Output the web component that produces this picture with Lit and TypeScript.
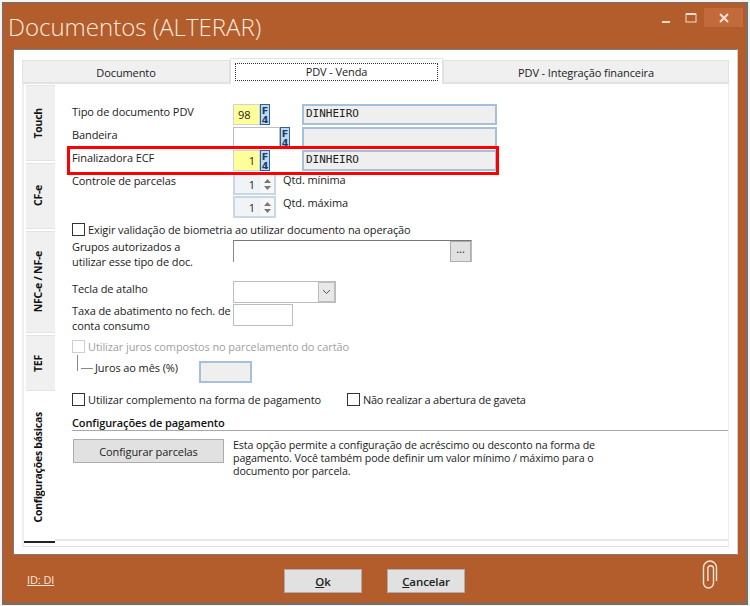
import { LitElement, html, css } from "lit";
import { customElement } from "lit/decorators.js";

@customElement("app-root")
export class AppRoot extends LitElement {
  static styles = css`
    :host { display: block; width: 750px; height: 606px; background: #f4f4f4; font-family: "Open Sans", "Noto Sans", sans-serif; font-size: 11px; letter-spacing: -0.1px; color: #222; overflow: hidden; }
    * { box-sizing: border-box; }
    .window { width: 746px; height: 603px; margin: 2px 0 0 2px; background: #b25d2b; border: 1px solid #707070; border-width: 1px 2px 2px 1px; display: flex; flex-direction: column; position: relative; }
    .titlebar { height: 46px; display: flex; align-items: flex-start; justify-content: space-between; flex: none; }
    h1 { margin: 7px 0 0 5px; font-size: 24px; line-height: 34px; font-weight: 300; letter-spacing: 0; color: #fbeadf; }
    .wctl { display: flex; align-items: flex-start; margin-top: 5px; margin-right: 3px; }
    .wbtn { width: 26px; height: 19px; display: flex; align-items: center; justify-content: center; }
    .wbtn.close { width: 39px; background: #c36a3d; }
    .panel { margin: 0 8px 0 10px; height: 506px; flex: none; background: #fff; border: 1px solid #7c7c7c; border-right-color: #d0d0d0; padding: 10px 8px 7px 8px; display: flex; flex-direction: column; }
    .tabs { display: flex; height: 24px; flex: none; }
    .tab { background: #f0f0f0; border: 1px solid #e2e2e2; border-bottom: 2px solid #e2e2e2; display: flex; align-items: center; justify-content: center; color: #222; padding-top: 1px; }
    .tab.doc { width: 208px; }
    .tab.cur { width: 213px; height: 26px; margin-top: -2px; background: #fff; border-bottom: none; padding: 2px 4px; }
    .focus { width: 100%; height: 18px; border: 1px dotted #333; display: flex; align-items: center; justify-content: center; }
    .tab.fin { flex: 1; }
    .page { flex: 1; display: flex; border-left: 2px solid #eee; border-right: 1px solid #eee; border-bottom: 1px solid #ddd; min-height: 0; }
    .vtabs { width: 31px; flex: none; padding-left: 2px; padding-top: 1px; display: flex; flex-direction: column; }
    .vtab { width: 29px; background: #f0f0f0; border-top: 1px solid #e4e4e4; border-bottom: 1px solid #e4e4e4; display: flex; align-items: center; justify-content: center; margin-bottom: 2px; padding-right: 5px; }
    .vtab span { writing-mode: vertical-rl; transform: rotate(180deg); font-weight: 700; font-size: 10.5px; letter-spacing: -0.25px; color: #111; white-space: nowrap; }
    .vtab.active { background: #fff; border: none; border-bottom: 2px solid #222; margin: 0 0 0 -2px; width: 31px; padding-right: 4px; }
    .form { flex: 1; position: relative; border-bottom: 2px solid #e8e8e8; margin-bottom: 5px; padding: 20px 0 0 17px; min-width: 0; }
    .row { display: grid; grid-template-columns: 161px auto; margin-bottom: 2px; height: 21px; }
    .lbl { line-height: 16px; white-space: nowrap; }
    .lbl.two { line-height: 14.5px; }
    .field { display: flex; align-items: flex-start; }
    .input { height: 21px; border: 1px solid #bdbdbd; background: #fff; line-height: 19px; padding: 0 4px; }
    .code { width: 27px; border-color: #cdd3d9; }
    .yellow { background: #ffff99; }
    .r { text-align: right; }
    .f4 { width: 10px; height: 21px; background: #c4d6ea; border: 1px solid #2d6296; color: #16406c; display: flex; align-items: center; justify-content: center; }
    .f4 span { display: block; width: 7px; font: 700 9.5px/9px "DejaVu Sans", sans-serif; word-break: break-all; letter-spacing: 0; text-align: center; }
    .desc { width: 195px; height: 21px; margin-left: 32px; background: #efefef; border: 2px solid #a7c0da; font: 11px/16px "DejaVu Sans Mono", monospace; letter-spacing: 0; color: #222; padding-left: 2px; }
    .spin { width: 43px; height: 22px; background: #f1f4f7; border: 2px solid #c9d6e3; display: flex; align-items: center; justify-content: flex-end; }
    .spin b { font-weight: 400; padding-right: 6px; }
    .arrows { width: 13px; height: 100%; display: flex; flex-direction: column; align-items: center; justify-content: center; gap: 3px; background: #f7f7f7; }
    .qt { margin-left: 7px; line-height: 15px; margin-top: -1px; }
    .check { display: flex; align-items: center; gap: 3px; height: 14px; white-space: nowrap; }
    .check.tight { letter-spacing: -0.25px; }
    .box { width: 13px; height: 13px; border: 1px solid #333; background: #fff; flex: none; }
    .dim { color: #a0a0a0; }
    .dim .box { border-color: #d0d0d0; }
    .group { height: 22px; }
    .combo-wide { width: 239px; height: 22px; border: 1px solid #bbb; border-top-color: #777; border-left-color: #888; border-bottom: none; display: flex; justify-content: flex-end; align-items: stretch; }
    .dots { width: 21px; background: #e1e1e1; border: 1px solid #adadad; line-height: 14px; text-align: center; }
    .combo { width: 103px; height: 22px; border: 1px solid #bdbdbd; display: flex; justify-content: flex-end; }
    .combo i { width: 17px; background: #e8e8e8; border: 1px solid #bdbdbd; display: flex; align-items: center; justify-content: center; }
    .juros { display: flex; height: 20px; margin: 8px 0 11px; }
    .tree { width: 18px; height: 16px; border-left: 1px solid #888; margin-left: 5px; position: relative; flex: none; margin-top: -6px; }
    .tree::after { content: ""; position: absolute; left: 3px; bottom: 2px; width: 12px; border-top: 1px solid #888; }
    .juros span { line-height: 14px; width: 104px; }
    .juros-in { width: 53px; height: 22px; background: #efefef; border: 2px solid #a7c0da; }
    .two-checks { display: flex; gap: 26px; }
    .sec { font-weight: 600; margin-top: 9px; height: 16px; line-height: 16px; border-bottom: 1px solid #a8a8a8; color: #111; }
    .cfg { display: flex; margin-top: 8px; gap: 9px; padding-left: 1px; }
    .btn { background: #e1e1e1; border: 1px solid #adadad; display: flex; align-items: center; justify-content: center; color: #222; }
    .cfg .btn { width: 151px; height: 24px; flex: none; }
    .cfg p { margin: 0; white-space: nowrap; font-size: 10.7px; line-height: 13px; }
    .highlight { position: absolute; left: 12px; top: 62px; width: 432px; height: 29px; border: 3px solid #f00; pointer-events: none; }
    .footer { flex: 1; position: relative; display: flex; align-items: flex-start; padding-left: 24px; }
    .id { margin-top: 17px; color: #fbe6d8; text-decoration: underline; width: 257px; }
    .fbtns { display: flex; gap: 25px; margin-top: 14px; }
    .fbtns .btn { width: 78px; height: 24px; font-weight: 600; font-size: 11.5px; }
    u { text-decoration: underline; }
    .clip { position: absolute; right: 28px; top: 5px; }
  `;

  private f4() { return html`<div class="f4"><span>F4</span></div>`; }

  private spin(v: string) {
    return html`<div class="spin"><b>${v}</b><div class="arrows">
      <svg width="7" height="4"><path d="M3.5 0L7 4H0z" fill="#777"/></svg>
      <svg width="7" height="4"><path d="M0 0H7L3.5 4z" fill="#777"/></svg>
    </div></div>`;
  }

  render() {
    return html`
      <div class="window">
        <div class="titlebar">
          <h1>Documentos (ALTERAR)</h1>
          <div class="wctl">
            <div class="wbtn"><svg width="10" height="10"><path d="M2 9h8" stroke="#f3dccd" stroke-width="2"/></svg></div>
            <div class="wbtn"><svg width="12" height="10"><rect x="1" y="1" width="10" height="8" fill="none" stroke="#f3dccd" stroke-width="1"/><path d="M1 1h10" stroke="#f3dccd" stroke-width="2"/></svg></div>
            <div class="wbtn close"><svg width="10" height="10"><path d="M1 1l8 8M9 1l-8 8" stroke="#f6e4d8" stroke-width="2"/></svg></div>
          </div>
        </div>
        <div class="panel">
          <div class="tabs">
            <div class="tab doc">Documento</div>
            <div class="tab cur"><div class="focus">PDV - Venda</div></div>
            <div class="tab fin">PDV - Integração financeira</div>
          </div>
          <div class="page">
            <div class="vtabs">
              <div class="vtab" style="height:76px"><span>Touch</span></div>
              <div class="vtab" style="height:66px"><span>CF-e</span></div>
              <div class="vtab" style="height:102px"><span>NFC-e / NF-e</span></div>
              <div class="vtab" style="height:56px"><span>TEF</span></div>
              <div class="vtab active" style="height:150px"><span>Configurações básicas</span></div>
            </div>
            <div class="form">
              <div class="row"><div class="lbl">Tipo de documento PDV</div><div class="field"><div class="input code yellow">98</div>${this.f4()}<div class="desc">DINHEIRO</div></div></div>
              <div class="row"><div class="lbl">Bandeira</div><div class="field"><div class="input" style="width:47px"></div>${this.f4()}<div class="desc" style="margin-left:12px"></div></div></div>
              <div class="row"><div class="lbl">Finalizadora ECF</div><div class="field"><div class="input code yellow r">1</div>${this.f4()}<div class="desc">DINHEIRO</div></div></div>
              <div class="row"><div class="lbl">Controle de parcelas</div><div class="field">${this.spin("1")}<div class="qt">Qtd. mínima</div></div></div>
              <div class="row"><div class="lbl"></div><div class="field">${this.spin("1")}<div class="qt">Qtd. máxima</div></div></div>
              <div class="check" style="margin-top:5px"><div class="box"></div>Exigir validação de biometria ao utilizar documento na operação</div>
              <div class="row group" style="margin-top:4px;margin-bottom:19px"><div class="lbl two">Grupos autorizados a<br>utilizar esse tipo de doc.</div><div class="field"><div class="combo-wide"><div class="dots">...</div></div></div></div>
              <div class="row group" style="margin-bottom:1px"><div class="lbl">Tecla de atalho</div><div class="field"><div class="combo"><i><svg width="9" height="6"><path d="M1 1l3.5 3.5L8 1" fill="none" stroke="#555"/></svg></i></div></div></div>
              <div class="row group" style="margin-bottom:13px"><div class="lbl two">Taxa de abatimento no fech. de<br>conta consumo</div><div class="field"><div class="input" style="width:60px;height:22px"></div></div></div>
              <div class="check dim"><div class="box"></div>Utilizar juros compostos no parcelamento do cartão</div>
              <div class="juros"><div class="tree"></div><span>Juros ao mês (%)</span><div class="juros-in"></div></div>
              <div class="two-checks"><div class="check"><div class="box"></div>Utilizar complemento na forma de pagamento</div><div class="check tight"><div class="box"></div>Não realizar a abertura de gaveta</div></div>
              <div class="sec">Configurações de pagamento</div>
              <div class="cfg"><div class="btn">Configurar parcelas</div><p>Esta opção permite a configuração de acréscimo ou desconto na forma de<br>pagamento. Você também pode definir um valor mínimo / máximo para o<br>documento por parcela.</p></div>
              <div class="highlight"></div>
            </div>
          </div>
        </div>
        <div class="footer">
          <div class="id">ID: DI</div>
          <div class="fbtns"><div class="btn"><span><u>O</u>k</span></div><div class="btn"><span><u>C</u>ancelar</span></div></div>
          <svg class="clip" width="16" height="30" viewBox="0 0 16 30"><path d="M14.5 21V7.5a6.5 6.5 0 0 0-13 0V23a5 5 0 0 0 10 0V8.5a2.8 2.8 0 0 0-5.6 0V21" fill="none" stroke="#f7e6da" stroke-width="1.4"/></svg>
        </div>
      </div>
    `;
  }
}
